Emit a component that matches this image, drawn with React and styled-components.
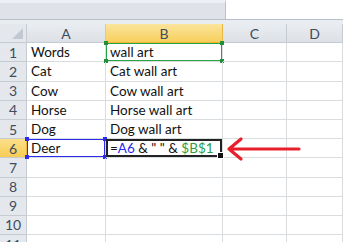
import styled, { createGlobalStyle } from "styled-components";

const GlobalStyle = createGlobalStyle`
  html, body {
    margin: 0;
    padding: 0;
    background: #ffffff;
  }
  body {
    font-family: Lato, "Liberation Sans", sans-serif;
  }
`;

const rows = [
  ["Words", "wall art"],
  ["Cat", "Cat wall art"],
  ["Cow", "Cow wall art"],
  ["Horse", "Horse wall art"],
  ["Dog", "Dog wall art"],
  ["Deer", null],
  ["", ""],
  ["", ""],
  ["", ""],
  ["", ""],
  ["", ""],
];

function App() {
  return (
    <>
      <GlobalStyle />
      <Page>
        <TopBar>
          <NamePanel />
          <BlankPanel />
        </TopBar>
        <Spacer />
        <Grid>
          <Corner>
            <CornerTriangle />
          </Corner>
          <ColHeader>A</ColHeader>
          <ColHeader $active>B</ColHeader>
          <ColHeader>C</ColHeader>
          <ColHeader>D</ColHeader>
          {rows.map(([a, b], i) => {
            const n = i + 1;
            return [
              <RowHeader key={`h${n}`} $active={n === 6}>
                {n}
              </RowHeader>,
              <Cell key={`a${n}`} $mode={n === 6 ? "ref" : null}>
                <span>{a}</span>
                {n === 6 && <Handles $color="#2a2af0" />}
              </Cell>,
              <Cell key={`b${n}`} $mode={n === 1 ? "selected" : n === 6 ? "edit" : null}>
                {b !== null ? (
                  <span>{b}</span>
                ) : (
                  <span>
                    =<Ref $color="#2a2af0">A6</Ref> &amp; &quot; &quot; &amp;{" "}
                    <Ref $color="#2e9e3e">$B$1</Ref>
                  </span>
                )}
                {n === 1 && <Handles $color="#1f8f3a" />}
                {n === 6 && <FillHandle />}
              </Cell>,
              <Cell key={`c${n}`} />,
              <Cell key={`d${n}`} />,
            ];
          })}
        </Grid>
        <Arrow width="80" height="28" viewBox="0 0 80 28">
          <path
            d="M4 14 L74 14 M4 14 L16 4 M4 14 L16 24"
            stroke="#e8202c"
            strokeWidth="3.2"
            strokeLinecap="round"
            fill="none"
          />
        </Arrow>
      </Page>
    </>
  );
}

function Handles({ $color }) {
  return (
    <>
      <Handle $color={$color} style={{ left: -2, top: -2 }} />
      <Handle $color={$color} style={{ left: -2, bottom: -2 }} />
      <Handle $color={$color} style={{ right: -2, bottom: -2 }} />
      <Handle $color={$color} style={{ right: -2, top: -2 }} />
    </>
  );
}

const Page = styled.div`
  position: relative;
  width: 343px;
  height: 242px;
  overflow: hidden;
  background: #ffffff;
`;

const TopBar = styled.div`
  display: flex;
  height: 20px;
  border-bottom: 1px solid #b7bec8;
  box-sizing: border-box;
`;

const NamePanel = styled.div`
  width: 226px;
  background: #dfe3e9;
  border-top: 3px solid #eceff3;
  border-right: 1px solid #b9c0c9;
  box-sizing: border-box;
`;

const BlankPanel = styled.div`
  flex: 1;
  background: #ffffff;
`;

const Spacer = styled.div`
  height: 4px;
  background: #e9ecf0;
`;

const Grid = styled.div`
  display: grid;
  grid-template-columns: 27px 79px 117px 64px 1fr;
  grid-auto-rows: 19.2px;
`;

const HeaderBase = styled.div`
  display: flex;
  align-items: center;
  justify-content: center;
  box-sizing: border-box;
  border-right: 1px solid #c5cbd3;
  border-bottom: 1px solid #c5cbd3;
  font-size: 14px;
  color: #3e4c5e;
`;

const Corner = styled(HeaderBase)`
  position: relative;
  background: #e4e8ed;
`;

const CornerTriangle = styled.div`
  position: absolute;
  right: 3px;
  bottom: 3px;
  width: 0;
  height: 0;
  border-left: 11px solid transparent;
  border-bottom: 11px solid #c2c8cf;
`;

const ColHeader = styled(HeaderBase)`
  background: ${({ $active }) =>
    $active ? "linear-gradient(#fbe59c, #f7cf5c)" : "linear-gradient(#e9ecf0, #dde1e7)"};
  border-bottom-color: ${({ $active }) => ($active ? "#f2b533" : "#c5cbd3")};
  border-right-color: ${({ $active }) => ($active ? "#e9b642" : "#c5cbd3")};
`;

const RowHeader = styled(HeaderBase)`
  background: ${({ $active }) => ($active ? "linear-gradient(#fbe08a, #f7cc55)" : "#e4e8ed")};
  border-right-color: ${({ $active }) => ($active ? "#f2b533" : "#c5cbd3")};
`;

const Cell = styled.div`
  position: relative;
  display: flex;
  align-items: center;
  padding-left: 4px;
  box-sizing: border-box;
  border-right: 1px solid #dadde0;
  border-bottom: 1px solid #dadde0;
  font-size: 13.5px;
  color: #111111;
  white-space: nowrap;
  ${({ $mode }) =>
    $mode === "selected" &&
    `
    box-shadow: inset 0 0 0 1px #28a445;
  `}
  ${({ $mode }) =>
    $mode === "ref" &&
    `
    box-shadow: inset 0 0 0 1px #2a2af0;
  `}
  ${({ $mode }) =>
    $mode === "edit" &&
    `
    box-shadow: inset 0 0 0 2px #222222, inset 2px 0 0 0 #f2e233;
    z-index: 1;
  `}
`;

const Ref = styled.span`
  color: ${({ $color }) => $color};
`;

const Handle = styled.span`
  position: absolute;
  width: 4px;
  height: 4px;
  background: ${({ $color }) => $color};
`;

const FillHandle = styled.span`
  position: absolute;
  right: -2px;
  bottom: -2px;
  width: 5px;
  height: 5px;
  background: #111111;
  border: 1px solid #ffffff;
`;

const Arrow = styled.svg`
  position: absolute;
  left: 225px;
  top: 135px;
`;

export default App;
